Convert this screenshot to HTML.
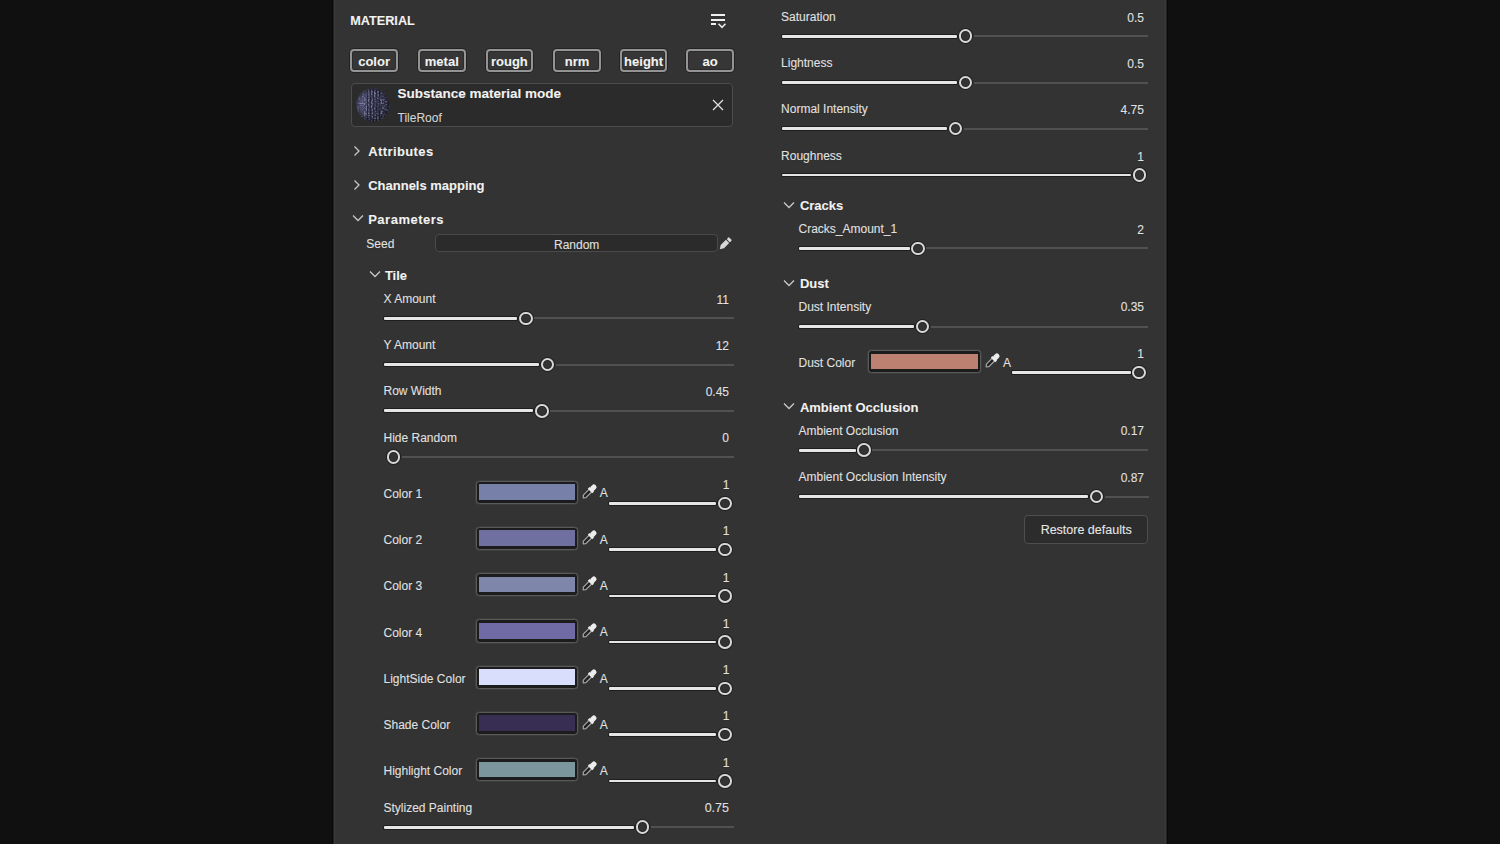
<!DOCTYPE html>
<html><head><meta charset="utf-8"><style>
html,body{margin:0;padding:0;width:1500px;height:844px;overflow:hidden;background:#101010;}
.panel{position:absolute;left:333px;top:0;width:834px;height:844px;background:#333333;border-left:1px solid #222;border-right:1px solid #222;box-sizing:border-box;box-shadow:-1px 0 0 #0a0a0a, 1px 0 0 #0a0a0a, inset 1px 0 0 #3a3a3a, inset -1px 0 0 #3a3a3a;}
.a{position:absolute;}
.t{position:absolute;white-space:nowrap;font-family:'Liberation Sans', sans-serif;-webkit-text-stroke:0.12px currentColor;text-shadow:0 0 1px rgba(0,0,0,.55);}
</style></head><body>
<div class="panel"></div>
<div class="t" style="top:14.5px;font-size:12.7px;line-height:12.7px;font-weight:700;color:#f2f2f2;left:350.2px;">MATERIAL</div>
<div class="a" style="left:711.0px;top:14.0px;width:14.0px;height:2.0px;background:#f0f0f0;"></div>
<div class="a" style="left:711.0px;top:18.5px;width:14.0px;height:2.0px;background:#f0f0f0;"></div>
<div class="a" style="left:711.0px;top:23.0px;width:5.0px;height:2.0px;background:#f0f0f0;"></div>
<svg class="a" style="left:717px;top:22px" width="10" height="8" viewBox="0 0 10 8"><path d="M1.5 1.8 L5 5.3 L8.5 1.8" fill="none" stroke="#e8e8e8" stroke-width="1.6"/></svg>
<div class="a" style="left:350.3px;top:48.8px;width:47.6px;height:23.0px;border:2px solid #949494;border-radius:4px;box-sizing:border-box;background:#363636;box-shadow:0 0 0 1px rgba(0,0,0,.3), inset 0 0 0 1px rgba(0,0,0,.2);"></div>
<div class="t" style="left:350.3px;width:47.6px;text-align:center;top:55px;font-size:13px;line-height:13px;font-weight:700;color:#f2f2f2;">color</div>
<div class="a" style="left:418.0px;top:48.8px;width:47.6px;height:23.0px;border:2px solid #949494;border-radius:4px;box-sizing:border-box;background:#363636;box-shadow:0 0 0 1px rgba(0,0,0,.3), inset 0 0 0 1px rgba(0,0,0,.2);"></div>
<div class="t" style="left:418.0px;width:47.6px;text-align:center;top:55px;font-size:13px;line-height:13px;font-weight:700;color:#f2f2f2;">metal</div>
<div class="a" style="left:485.6px;top:48.8px;width:47.6px;height:23.0px;border:2px solid #949494;border-radius:4px;box-sizing:border-box;background:#363636;box-shadow:0 0 0 1px rgba(0,0,0,.3), inset 0 0 0 1px rgba(0,0,0,.2);"></div>
<div class="t" style="left:485.6px;width:47.6px;text-align:center;top:55px;font-size:13px;line-height:13px;font-weight:700;color:#f2f2f2;">rough</div>
<div class="a" style="left:553.3px;top:48.8px;width:47.6px;height:23.0px;border:2px solid #949494;border-radius:4px;box-sizing:border-box;background:#363636;box-shadow:0 0 0 1px rgba(0,0,0,.3), inset 0 0 0 1px rgba(0,0,0,.2);"></div>
<div class="t" style="left:553.3px;width:47.6px;text-align:center;top:55px;font-size:13px;line-height:13px;font-weight:700;color:#f2f2f2;">nrm</div>
<div class="a" style="left:619.8px;top:48.8px;width:47.6px;height:23.0px;border:2px solid #949494;border-radius:4px;box-sizing:border-box;background:#363636;box-shadow:0 0 0 1px rgba(0,0,0,.3), inset 0 0 0 1px rgba(0,0,0,.2);"></div>
<div class="t" style="left:619.8px;width:47.6px;text-align:center;top:55px;font-size:13px;line-height:13px;font-weight:700;color:#f2f2f2;">height</div>
<div class="a" style="left:686.3px;top:48.8px;width:47.6px;height:23.0px;border:2px solid #949494;border-radius:4px;box-sizing:border-box;background:#363636;box-shadow:0 0 0 1px rgba(0,0,0,.3), inset 0 0 0 1px rgba(0,0,0,.2);"></div>
<div class="t" style="left:686.3px;width:47.6px;text-align:center;top:55px;font-size:13px;line-height:13px;font-weight:700;color:#f2f2f2;">ao</div>
<div class="a" style="left:350.6px;top:83.2px;width:382.6px;height:44.0px;border:1.5px solid #4c4c4c;border-radius:4px;box-sizing:border-box;background:#2b2b2b;"></div>
<svg class="a" style="left:356px;top:88px" width="34" height="34" viewBox="0 0 34 34">
<defs>
<clipPath id="cp"><circle cx="17" cy="17" r="16.6"/></clipPath>
<linearGradient id="lg" x1="0" y1="0" x2="1" y2="0.4"><stop offset="0" stop-color="#5e5e88"/><stop offset="0.4" stop-color="#434362"/><stop offset="1" stop-color="#26263a"/></linearGradient>
<radialGradient id="rg" cx="0.5" cy="0.5" r="0.5"><stop offset="0.75" stop-color="#000" stop-opacity="0"/><stop offset="1" stop-color="#15151f" stop-opacity="0.6"/></radialGradient>
<filter id="nz" x="0" y="0" width="100%" height="100%"><feTurbulence type="fractalNoise" baseFrequency="0.6" numOctaves="1" seed="4"/><feColorMatrix values="0 0 0 0 0.7  0 0 0 0 0.7  0 0 0 0 0.85  0 0 0 5 -2.4"/></filter>
</defs>
<g clip-path="url(#cp)">
<rect width="34" height="34" fill="url(#lg)"/>
<rect width="34" height="34" filter="url(#nz)" opacity="0.38"/>
<g stroke="#101020" stroke-width="1" opacity="0.6"><path d="M11.5 0V34M14.5 0V34M17.5 0V34M20.5 0V34M23.5 0V34"/></g>
<rect width="34" height="34" fill="url(#rg)"/>
</g>
</svg>
<div class="t" style="top:87.4px;font-size:13.5px;line-height:13.5px;font-weight:700;color:#f2f2f2;left:397.5px;">Substance material mode</div>
<div class="t" style="top:112.0px;font-size:12px;line-height:12px;font-weight:400;color:#d6d6d6;left:397.5px;">TileRoof</div>
<svg class="a" style="left:712px;top:99px" width="12" height="12" viewBox="0 0 12 12"><path d="M1 1 L11 11 M11 1 L1 11" stroke="#e0e0e0" stroke-width="1.3"/></svg>
<svg class="a" style="left:353px;top:144.5px" width="8" height="12" viewBox="0 0 8 12"><path d="M1.5 1.5 L6 6 L1.5 10.5" fill="none" stroke="#c8c8c8" stroke-width="1.3"/></svg>
<div class="t" style="top:144.8px;font-size:13px;line-height:13px;font-weight:700;color:#f2f2f2;letter-spacing:0.4px;left:368.2px;">Attributes</div>
<svg class="a" style="left:353px;top:179px" width="8" height="12" viewBox="0 0 8 12"><path d="M1.5 1.5 L6 6 L1.5 10.5" fill="none" stroke="#c8c8c8" stroke-width="1.3"/></svg>
<div class="t" style="top:179.0px;font-size:13px;line-height:13px;font-weight:700;color:#f2f2f2;left:368.2px;">Channels mapping</div>
<svg class="a" style="left:351.5px;top:213.5px" width="12" height="8" viewBox="0 0 12 8"><path d="M1 1.5 L6 6.5 L11 1.5" fill="none" stroke="#c8c8c8" stroke-width="1.3"/></svg>
<div class="t" style="top:212.5px;font-size:13px;line-height:13px;font-weight:700;color:#f2f2f2;letter-spacing:0.5px;left:368.2px;">Parameters</div>
<div class="t" style="top:237.8px;font-size:12px;line-height:12px;font-weight:400;color:#e2e2e2;left:366.3px;">Seed</div>
<div class="a" style="left:435.4px;top:234.2px;width:282.6px;height:17.6px;border:1.5px solid #4a4a4a;border-radius:4px;box-sizing:border-box;background:#2b2b2b;"></div>
<div class="t" style="left:435.4px;width:282.6px;text-align:center;top:238.5px;font-size:12px;line-height:12px;color:#e0e0e0;">Random</div>
<svg class="a" style="left:717px;top:235.6px;overflow:visible" width="16" height="16" viewBox="0 0 16 16"><g transform="rotate(-45 8 8)" fill="#d8d8d8"><path d="M0.6 8 L4.2 5.7 L11.6 5.7 L11.6 10.3 L4.2 10.3 Z"/><rect x="12.6" y="5.7" width="3" height="4.6" rx="1"/></g></svg>
<svg class="a" style="left:368.5px;top:270.3px" width="12" height="8" viewBox="0 0 12 8"><path d="M1 1.5 L6 6.5 L11 1.5" fill="none" stroke="#c8c8c8" stroke-width="1.3"/></svg>
<div class="t" style="top:269.2px;font-size:13px;line-height:13px;font-weight:700;color:#f2f2f2;left:384.9px;">Tile</div>
<div class="t" style="top:292.8px;font-size:12px;line-height:12px;font-weight:400;color:#e2e2e2;left:383.5px;">X Amount</div>
<div class="t" style="top:293.6px;font-size:12px;line-height:12px;font-weight:400;color:#e2e2e2;right:771.0px;">11</div>
<div class="a" style="left:384.0px;top:316.9px;width:133.4px;height:2.8px;background:#e6e6e6;border-radius:1px;box-shadow:0 0 0 1px rgba(0,0,0,.4);"></div>
<div class="a" style="left:534.2px;top:317.3px;width:199.4px;height:2.0px;background:#515151;"></div>
<div class="a" style="left:519.2px;top:311.5px;width:13.6px;height:13.6px;border:2.5px solid #d8d8d8;border-radius:50%;box-sizing:border-box;box-shadow:0 0 0 1px rgba(0,0,0,.4), inset 0 0 0 1px rgba(0,0,0,.3);"></div>
<div class="t" style="top:339.1px;font-size:12px;line-height:12px;font-weight:400;color:#e2e2e2;left:383.5px;">Y Amount</div>
<div class="t" style="top:339.9px;font-size:12px;line-height:12px;font-weight:400;color:#e2e2e2;right:771.0px;">12</div>
<div class="a" style="left:384.0px;top:363.2px;width:155.1px;height:2.8px;background:#e6e6e6;border-radius:1px;box-shadow:0 0 0 1px rgba(0,0,0,.4);"></div>
<div class="a" style="left:555.9px;top:363.6px;width:177.7px;height:2.0px;background:#515151;"></div>
<div class="a" style="left:540.9px;top:357.8px;width:13.6px;height:13.6px;border:2.5px solid #d8d8d8;border-radius:50%;box-sizing:border-box;box-shadow:0 0 0 1px rgba(0,0,0,.4), inset 0 0 0 1px rgba(0,0,0,.3);"></div>
<div class="t" style="top:385.3px;font-size:12px;line-height:12px;font-weight:400;color:#e2e2e2;left:383.5px;">Row Width</div>
<div class="t" style="top:386.1px;font-size:12px;line-height:12px;font-weight:400;color:#e2e2e2;right:771.0px;">0.45</div>
<div class="a" style="left:384.0px;top:409.4px;width:149.4px;height:2.8px;background:#e6e6e6;border-radius:1px;box-shadow:0 0 0 1px rgba(0,0,0,.4);"></div>
<div class="a" style="left:550.2px;top:409.8px;width:183.4px;height:2.0px;background:#515151;"></div>
<div class="a" style="left:535.2px;top:404.0px;width:13.6px;height:13.6px;border:2.5px solid #d8d8d8;border-radius:50%;box-sizing:border-box;box-shadow:0 0 0 1px rgba(0,0,0,.4), inset 0 0 0 1px rgba(0,0,0,.3);"></div>
<div class="t" style="top:431.6px;font-size:12px;line-height:12px;font-weight:400;color:#e2e2e2;left:383.5px;">Hide Random</div>
<div class="t" style="top:432.4px;font-size:12px;line-height:12px;font-weight:400;color:#e2e2e2;right:771.0px;">0</div>
<div class="a" style="left:401.5px;top:456.1px;width:332.1px;height:2.0px;background:#515151;"></div>
<div class="a" style="left:386.5px;top:450.3px;width:13.6px;height:13.6px;border:2.5px solid #d8d8d8;border-radius:50%;box-sizing:border-box;box-shadow:0 0 0 1px rgba(0,0,0,.4), inset 0 0 0 1px rgba(0,0,0,.3);"></div>
<div class="t" style="top:487.8px;font-size:12px;line-height:12px;font-weight:400;color:#e2e2e2;left:383.5px;">Color 1</div>
<div class="a" style="left:475.7px;top:480.5px;width:102.4px;height:23.4px;border:1px solid #5a5a5a;border-radius:3.5px;box-sizing:border-box;background:#1c1c1c;box-shadow:0 0 0 0.6px rgba(90,90,90,.5);"></div>
<div class="a" style="left:478.9px;top:484.0px;width:96.0px;height:15.9px;background:#7680a8;"></div>
<svg class="a" style="left:581.5px;top:483.84000000000003px;overflow:visible" width="16" height="16" viewBox="0 0 16 16"><g transform="rotate(-45 7.5 7.5)">
<path d="M-1.4 7.5 L0.6 5.7 L9 5.7 L9 9.3 L0.6 9.3 Z" fill="#222" stroke="#a8a8a8" stroke-width="1.2" stroke-linejoin="round"/>
<rect x="8.3" y="4.3" width="2.4" height="6.4" fill="#ececec"/>
<rect x="9.5" y="4.9" width="6.8" height="5.2" rx="2.4" fill="#ececec"/>
</g></svg>
<div class="t" style="top:487.4px;font-size:12px;line-height:12px;font-weight:400;color:#e2e2e2;left:599.7px;">A</div>
<div class="t" style="top:479.0px;font-size:12px;line-height:12px;font-weight:400;color:#e2e2e2;right:770.6px;">1</div>
<div class="a" style="left:608.6px;top:501.9px;width:107.6px;height:2.8px;background:#e6e6e6;border-radius:1px;box-shadow:0 0 0 1px rgba(0,0,0,.4);"></div>
<div class="a" style="left:718.0px;top:496.5px;width:13.6px;height:13.6px;border:2.5px solid #d8d8d8;border-radius:50%;box-sizing:border-box;box-shadow:0 0 0 1px rgba(0,0,0,.4), inset 0 0 0 1px rgba(0,0,0,.3);"></div>
<div class="t" style="top:534.1px;font-size:12px;line-height:12px;font-weight:400;color:#e2e2e2;left:383.5px;">Color 2</div>
<div class="a" style="left:475.7px;top:526.8px;width:102.4px;height:23.4px;border:1px solid #5a5a5a;border-radius:3.5px;box-sizing:border-box;background:#1c1c1c;box-shadow:0 0 0 0.6px rgba(90,90,90,.5);"></div>
<div class="a" style="left:478.9px;top:530.3px;width:96.0px;height:15.9px;background:#6f70a0;"></div>
<svg class="a" style="left:581.5px;top:530.1px;overflow:visible" width="16" height="16" viewBox="0 0 16 16"><g transform="rotate(-45 7.5 7.5)">
<path d="M-1.4 7.5 L0.6 5.7 L9 5.7 L9 9.3 L0.6 9.3 Z" fill="#222" stroke="#a8a8a8" stroke-width="1.2" stroke-linejoin="round"/>
<rect x="8.3" y="4.3" width="2.4" height="6.4" fill="#ececec"/>
<rect x="9.5" y="4.9" width="6.8" height="5.2" rx="2.4" fill="#ececec"/>
</g></svg>
<div class="t" style="top:533.7px;font-size:12px;line-height:12px;font-weight:400;color:#e2e2e2;left:599.7px;">A</div>
<div class="t" style="top:525.3px;font-size:12px;line-height:12px;font-weight:400;color:#e2e2e2;right:770.6px;">1</div>
<div class="a" style="left:608.6px;top:548.2px;width:107.6px;height:2.8px;background:#e6e6e6;border-radius:1px;box-shadow:0 0 0 1px rgba(0,0,0,.4);"></div>
<div class="a" style="left:718.0px;top:542.8px;width:13.6px;height:13.6px;border:2.5px solid #d8d8d8;border-radius:50%;box-sizing:border-box;box-shadow:0 0 0 1px rgba(0,0,0,.4), inset 0 0 0 1px rgba(0,0,0,.3);"></div>
<div class="t" style="top:580.4px;font-size:12px;line-height:12px;font-weight:400;color:#e2e2e2;left:383.5px;">Color 3</div>
<div class="a" style="left:475.7px;top:573.1px;width:102.4px;height:23.4px;border:1px solid #5a5a5a;border-radius:3.5px;box-sizing:border-box;background:#1c1c1c;box-shadow:0 0 0 0.6px rgba(90,90,90,.5);"></div>
<div class="a" style="left:478.9px;top:576.6px;width:96.0px;height:15.9px;background:#7e87aa;"></div>
<svg class="a" style="left:581.5px;top:576.36px;overflow:visible" width="16" height="16" viewBox="0 0 16 16"><g transform="rotate(-45 7.5 7.5)">
<path d="M-1.4 7.5 L0.6 5.7 L9 5.7 L9 9.3 L0.6 9.3 Z" fill="#222" stroke="#a8a8a8" stroke-width="1.2" stroke-linejoin="round"/>
<rect x="8.3" y="4.3" width="2.4" height="6.4" fill="#ececec"/>
<rect x="9.5" y="4.9" width="6.8" height="5.2" rx="2.4" fill="#ececec"/>
</g></svg>
<div class="t" style="top:580.0px;font-size:12px;line-height:12px;font-weight:400;color:#e2e2e2;left:599.7px;">A</div>
<div class="t" style="top:571.6px;font-size:12px;line-height:12px;font-weight:400;color:#e2e2e2;right:770.6px;">1</div>
<div class="a" style="left:608.6px;top:594.5px;width:107.6px;height:2.8px;background:#e6e6e6;border-radius:1px;box-shadow:0 0 0 1px rgba(0,0,0,.4);"></div>
<div class="a" style="left:718.0px;top:589.1px;width:13.6px;height:13.6px;border:2.5px solid #d8d8d8;border-radius:50%;box-sizing:border-box;box-shadow:0 0 0 1px rgba(0,0,0,.4), inset 0 0 0 1px rgba(0,0,0,.3);"></div>
<div class="t" style="top:626.6px;font-size:12px;line-height:12px;font-weight:400;color:#e2e2e2;left:383.5px;">Color 4</div>
<div class="a" style="left:475.7px;top:619.3px;width:102.4px;height:23.4px;border:1px solid #5a5a5a;border-radius:3.5px;box-sizing:border-box;background:#1c1c1c;box-shadow:0 0 0 0.6px rgba(90,90,90,.5);"></div>
<div class="a" style="left:478.9px;top:622.8px;width:96.0px;height:15.9px;background:#716ba5;"></div>
<svg class="a" style="left:581.5px;top:622.62px;overflow:visible" width="16" height="16" viewBox="0 0 16 16"><g transform="rotate(-45 7.5 7.5)">
<path d="M-1.4 7.5 L0.6 5.7 L9 5.7 L9 9.3 L0.6 9.3 Z" fill="#222" stroke="#a8a8a8" stroke-width="1.2" stroke-linejoin="round"/>
<rect x="8.3" y="4.3" width="2.4" height="6.4" fill="#ececec"/>
<rect x="9.5" y="4.9" width="6.8" height="5.2" rx="2.4" fill="#ececec"/>
</g></svg>
<div class="t" style="top:626.2px;font-size:12px;line-height:12px;font-weight:400;color:#e2e2e2;left:599.7px;">A</div>
<div class="t" style="top:617.8px;font-size:12px;line-height:12px;font-weight:400;color:#e2e2e2;right:770.6px;">1</div>
<div class="a" style="left:608.6px;top:640.7px;width:107.6px;height:2.8px;background:#e6e6e6;border-radius:1px;box-shadow:0 0 0 1px rgba(0,0,0,.4);"></div>
<div class="a" style="left:718.0px;top:635.3px;width:13.6px;height:13.6px;border:2.5px solid #d8d8d8;border-radius:50%;box-sizing:border-box;box-shadow:0 0 0 1px rgba(0,0,0,.4), inset 0 0 0 1px rgba(0,0,0,.3);"></div>
<div class="t" style="top:672.9px;font-size:12px;line-height:12px;font-weight:400;color:#e2e2e2;left:383.5px;">LightSide Color</div>
<div class="a" style="left:475.7px;top:665.6px;width:102.4px;height:23.4px;border:1px solid #5a5a5a;border-radius:3.5px;box-sizing:border-box;background:#1c1c1c;box-shadow:0 0 0 0.6px rgba(90,90,90,.5);"></div>
<div class="a" style="left:478.9px;top:669.1px;width:96.0px;height:15.9px;background:#d8defc;"></div>
<svg class="a" style="left:581.5px;top:668.88px;overflow:visible" width="16" height="16" viewBox="0 0 16 16"><g transform="rotate(-45 7.5 7.5)">
<path d="M-1.4 7.5 L0.6 5.7 L9 5.7 L9 9.3 L0.6 9.3 Z" fill="#222" stroke="#a8a8a8" stroke-width="1.2" stroke-linejoin="round"/>
<rect x="8.3" y="4.3" width="2.4" height="6.4" fill="#ececec"/>
<rect x="9.5" y="4.9" width="6.8" height="5.2" rx="2.4" fill="#ececec"/>
</g></svg>
<div class="t" style="top:672.5px;font-size:12px;line-height:12px;font-weight:400;color:#e2e2e2;left:599.7px;">A</div>
<div class="t" style="top:664.1px;font-size:12px;line-height:12px;font-weight:400;color:#e2e2e2;right:770.6px;">1</div>
<div class="a" style="left:608.6px;top:687.0px;width:107.6px;height:2.8px;background:#e6e6e6;border-radius:1px;box-shadow:0 0 0 1px rgba(0,0,0,.4);"></div>
<div class="a" style="left:718.0px;top:681.6px;width:13.6px;height:13.6px;border:2.5px solid #d8d8d8;border-radius:50%;box-sizing:border-box;box-shadow:0 0 0 1px rgba(0,0,0,.4), inset 0 0 0 1px rgba(0,0,0,.3);"></div>
<div class="t" style="top:719.1px;font-size:12px;line-height:12px;font-weight:400;color:#e2e2e2;left:383.5px;">Shade Color</div>
<div class="a" style="left:475.7px;top:711.8px;width:102.4px;height:23.4px;border:1px solid #5a5a5a;border-radius:3.5px;box-sizing:border-box;background:#1c1c1c;box-shadow:0 0 0 0.6px rgba(90,90,90,.5);"></div>
<div class="a" style="left:478.9px;top:715.3px;width:96.0px;height:15.9px;background:#382e54;"></div>
<svg class="a" style="left:581.5px;top:715.14px;overflow:visible" width="16" height="16" viewBox="0 0 16 16"><g transform="rotate(-45 7.5 7.5)">
<path d="M-1.4 7.5 L0.6 5.7 L9 5.7 L9 9.3 L0.6 9.3 Z" fill="#222" stroke="#a8a8a8" stroke-width="1.2" stroke-linejoin="round"/>
<rect x="8.3" y="4.3" width="2.4" height="6.4" fill="#ececec"/>
<rect x="9.5" y="4.9" width="6.8" height="5.2" rx="2.4" fill="#ececec"/>
</g></svg>
<div class="t" style="top:718.7px;font-size:12px;line-height:12px;font-weight:400;color:#e2e2e2;left:599.7px;">A</div>
<div class="t" style="top:710.3px;font-size:12px;line-height:12px;font-weight:400;color:#e2e2e2;right:770.6px;">1</div>
<div class="a" style="left:608.6px;top:733.2px;width:107.6px;height:2.8px;background:#e6e6e6;border-radius:1px;box-shadow:0 0 0 1px rgba(0,0,0,.4);"></div>
<div class="a" style="left:718.0px;top:727.8px;width:13.6px;height:13.6px;border:2.5px solid #d8d8d8;border-radius:50%;box-sizing:border-box;box-shadow:0 0 0 1px rgba(0,0,0,.4), inset 0 0 0 1px rgba(0,0,0,.3);"></div>
<div class="t" style="top:765.4px;font-size:12px;line-height:12px;font-weight:400;color:#e2e2e2;left:383.5px;">Highlight Color</div>
<div class="a" style="left:475.7px;top:758.1px;width:102.4px;height:23.4px;border:1px solid #5a5a5a;border-radius:3.5px;box-sizing:border-box;background:#1c1c1c;box-shadow:0 0 0 0.6px rgba(90,90,90,.5);"></div>
<div class="a" style="left:478.9px;top:761.6px;width:96.0px;height:15.9px;background:#7b969c;"></div>
<svg class="a" style="left:581.5px;top:761.4px;overflow:visible" width="16" height="16" viewBox="0 0 16 16"><g transform="rotate(-45 7.5 7.5)">
<path d="M-1.4 7.5 L0.6 5.7 L9 5.7 L9 9.3 L0.6 9.3 Z" fill="#222" stroke="#a8a8a8" stroke-width="1.2" stroke-linejoin="round"/>
<rect x="8.3" y="4.3" width="2.4" height="6.4" fill="#ececec"/>
<rect x="9.5" y="4.9" width="6.8" height="5.2" rx="2.4" fill="#ececec"/>
</g></svg>
<div class="t" style="top:765.0px;font-size:12px;line-height:12px;font-weight:400;color:#e2e2e2;left:599.7px;">A</div>
<div class="t" style="top:756.6px;font-size:12px;line-height:12px;font-weight:400;color:#e2e2e2;right:770.6px;">1</div>
<div class="a" style="left:608.6px;top:779.5px;width:107.6px;height:2.8px;background:#e6e6e6;border-radius:1px;box-shadow:0 0 0 1px rgba(0,0,0,.4);"></div>
<div class="a" style="left:718.0px;top:774.1px;width:13.6px;height:13.6px;border:2.5px solid #d8d8d8;border-radius:50%;box-sizing:border-box;box-shadow:0 0 0 1px rgba(0,0,0,.4), inset 0 0 0 1px rgba(0,0,0,.3);"></div>
<div class="t" style="top:801.6px;font-size:12px;line-height:12px;font-weight:400;color:#e2e2e2;left:383.5px;">Stylized Painting</div>
<div class="t" style="top:802.4px;font-size:12.5px;line-height:12.5px;font-weight:400;color:#e2e2e2;right:771.0px;">0.75</div>
<div class="a" style="left:384.0px;top:825.8px;width:249.8px;height:2.8px;background:#e6e6e6;border-radius:1px;box-shadow:0 0 0 1px rgba(0,0,0,.4);"></div>
<div class="a" style="left:650.6px;top:826.2px;width:83.0px;height:2.0px;background:#515151;"></div>
<div class="a" style="left:635.6px;top:820.4px;width:13.6px;height:13.6px;border:2.5px solid #d8d8d8;border-radius:50%;box-sizing:border-box;box-shadow:0 0 0 1px rgba(0,0,0,.4), inset 0 0 0 1px rgba(0,0,0,.3);"></div>
<div class="t" style="top:10.9px;font-size:12px;line-height:12px;font-weight:400;color:#e2e2e2;left:781.1px;">Saturation</div>
<div class="t" style="top:11.7px;font-size:12px;line-height:12px;font-weight:400;color:#e2e2e2;right:356.1px;">0.5</div>
<div class="a" style="left:782.0px;top:34.8px;width:174.8px;height:2.8px;background:#e6e6e6;border-radius:1px;box-shadow:0 0 0 1px rgba(0,0,0,.4);"></div>
<div class="a" style="left:973.6px;top:35.2px;width:174.7px;height:2.0px;background:#515151;"></div>
<div class="a" style="left:958.6px;top:29.4px;width:13.6px;height:13.6px;border:2.5px solid #d8d8d8;border-radius:50%;box-sizing:border-box;box-shadow:0 0 0 1px rgba(0,0,0,.4), inset 0 0 0 1px rgba(0,0,0,.3);"></div>
<div class="t" style="top:57.2px;font-size:12px;line-height:12px;font-weight:400;color:#e2e2e2;left:781.1px;">Lightness</div>
<div class="t" style="top:58.0px;font-size:12px;line-height:12px;font-weight:400;color:#e2e2e2;right:356.1px;">0.5</div>
<div class="a" style="left:782.0px;top:81.1px;width:174.8px;height:2.8px;background:#e6e6e6;border-radius:1px;box-shadow:0 0 0 1px rgba(0,0,0,.4);"></div>
<div class="a" style="left:973.6px;top:81.5px;width:174.7px;height:2.0px;background:#515151;"></div>
<div class="a" style="left:958.6px;top:75.7px;width:13.6px;height:13.6px;border:2.5px solid #d8d8d8;border-radius:50%;box-sizing:border-box;box-shadow:0 0 0 1px rgba(0,0,0,.4), inset 0 0 0 1px rgba(0,0,0,.3);"></div>
<div class="t" style="top:103.4px;font-size:12px;line-height:12px;font-weight:400;color:#e2e2e2;left:781.1px;">Normal Intensity</div>
<div class="t" style="top:104.2px;font-size:12px;line-height:12px;font-weight:400;color:#e2e2e2;right:356.1px;">4.75</div>
<div class="a" style="left:782.0px;top:127.3px;width:165.0px;height:2.8px;background:#e6e6e6;border-radius:1px;box-shadow:0 0 0 1px rgba(0,0,0,.4);"></div>
<div class="a" style="left:963.8px;top:127.7px;width:184.5px;height:2.0px;background:#515151;"></div>
<div class="a" style="left:948.8px;top:121.9px;width:13.6px;height:13.6px;border:2.5px solid #d8d8d8;border-radius:50%;box-sizing:border-box;box-shadow:0 0 0 1px rgba(0,0,0,.4), inset 0 0 0 1px rgba(0,0,0,.3);"></div>
<div class="t" style="top:149.7px;font-size:12px;line-height:12px;font-weight:400;color:#e2e2e2;left:781.1px;">Roughness</div>
<div class="t" style="top:150.5px;font-size:12px;line-height:12px;font-weight:400;color:#e2e2e2;right:356.1px;">1</div>
<div class="a" style="left:782.0px;top:173.6px;width:348.7px;height:2.8px;background:#e6e6e6;border-radius:1px;box-shadow:0 0 0 1px rgba(0,0,0,.4);"></div>
<div class="a" style="left:1132.5px;top:168.2px;width:13.6px;height:13.6px;border:2.5px solid #d8d8d8;border-radius:50%;box-sizing:border-box;box-shadow:0 0 0 1px rgba(0,0,0,.4), inset 0 0 0 1px rgba(0,0,0,.3);"></div>
<svg class="a" style="left:783px;top:200.5px" width="12" height="8" viewBox="0 0 12 8"><path d="M1 1.5 L6 6.5 L11 1.5" fill="none" stroke="#c8c8c8" stroke-width="1.3"/></svg>
<div class="t" style="top:198.9px;font-size:13px;line-height:13px;font-weight:700;color:#f2f2f2;left:799.9px;">Cracks</div>
<div class="t" style="top:222.7px;font-size:12px;line-height:12px;font-weight:400;color:#e2e2e2;left:798.5px;">Cracks_Amount_1</div>
<div class="t" style="top:223.9px;font-size:12px;line-height:12px;font-weight:400;color:#e2e2e2;right:356.0px;">2</div>
<div class="a" style="left:799.0px;top:246.9px;width:110.5px;height:2.8px;background:#e6e6e6;border-radius:1px;box-shadow:0 0 0 1px rgba(0,0,0,.4);"></div>
<div class="a" style="left:926.3px;top:247.3px;width:222.2px;height:2.0px;background:#515151;"></div>
<div class="a" style="left:911.3px;top:241.5px;width:13.6px;height:13.6px;border:2.5px solid #d8d8d8;border-radius:50%;box-sizing:border-box;box-shadow:0 0 0 1px rgba(0,0,0,.4), inset 0 0 0 1px rgba(0,0,0,.3);"></div>
<svg class="a" style="left:783px;top:278.5px" width="12" height="8" viewBox="0 0 12 8"><path d="M1 1.5 L6 6.5 L11 1.5" fill="none" stroke="#c8c8c8" stroke-width="1.3"/></svg>
<div class="t" style="top:276.8px;font-size:13px;line-height:13px;font-weight:700;color:#f2f2f2;left:799.9px;">Dust</div>
<div class="t" style="top:300.9px;font-size:12px;line-height:12px;font-weight:400;color:#e2e2e2;left:798.5px;">Dust Intensity</div>
<div class="t" style="top:301.4px;font-size:12px;line-height:12px;font-weight:400;color:#e2e2e2;right:356.0px;">0.35</div>
<div class="a" style="left:799.0px;top:325.1px;width:115.0px;height:2.8px;background:#e6e6e6;border-radius:1px;box-shadow:0 0 0 1px rgba(0,0,0,.4);"></div>
<div class="a" style="left:930.8px;top:325.5px;width:217.7px;height:2.0px;background:#515151;"></div>
<div class="a" style="left:915.8px;top:319.7px;width:13.6px;height:13.6px;border:2.5px solid #d8d8d8;border-radius:50%;box-sizing:border-box;box-shadow:0 0 0 1px rgba(0,0,0,.4), inset 0 0 0 1px rgba(0,0,0,.3);"></div>
<div class="t" style="top:356.9px;font-size:12px;line-height:12px;font-weight:400;color:#e2e2e2;left:798.5px;">Dust Color</div>
<div class="a" style="left:867.6px;top:350.3px;width:113.4px;height:23.0px;border:1px solid #5a5a5a;border-radius:3.5px;box-sizing:border-box;background:#1c1c1c;box-shadow:0 0 0 0.6px rgba(90,90,90,.5);"></div>
<div class="a" style="left:870.8px;top:353.8px;width:107.0px;height:15.5px;background:#bc8170;"></div>
<svg class="a" style="left:985px;top:353.0px;overflow:visible" width="16" height="16" viewBox="0 0 16 16"><g transform="rotate(-45 7.5 7.5)">
<path d="M-1.4 7.5 L0.6 5.7 L9 5.7 L9 9.3 L0.6 9.3 Z" fill="#222" stroke="#a8a8a8" stroke-width="1.2" stroke-linejoin="round"/>
<rect x="8.3" y="4.3" width="2.4" height="6.4" fill="#ececec"/>
<rect x="9.5" y="4.9" width="6.8" height="5.2" rx="2.4" fill="#ececec"/>
</g></svg>
<div class="t" style="top:356.6px;font-size:12px;line-height:12px;font-weight:400;color:#e2e2e2;left:1003.1px;">A</div>
<div class="t" style="top:347.6px;font-size:12px;line-height:12px;font-weight:400;color:#e2e2e2;right:356.0px;">1</div>
<div class="a" style="left:1011.7px;top:371.1px;width:118.9px;height:2.8px;background:#e6e6e6;border-radius:1px;box-shadow:0 0 0 1px rgba(0,0,0,.4);"></div>
<div class="a" style="left:1132.4px;top:365.7px;width:13.6px;height:13.6px;border:2.5px solid #d8d8d8;border-radius:50%;box-sizing:border-box;box-shadow:0 0 0 1px rgba(0,0,0,.4), inset 0 0 0 1px rgba(0,0,0,.3);"></div>
<svg class="a" style="left:783px;top:401.5px" width="12" height="8" viewBox="0 0 12 8"><path d="M1 1.5 L6 6.5 L11 1.5" fill="none" stroke="#c8c8c8" stroke-width="1.3"/></svg>
<div class="t" style="top:401.0px;font-size:13px;line-height:13px;font-weight:700;color:#f2f2f2;left:799.9px;">Ambient Occlusion</div>
<div class="t" style="top:424.5px;font-size:12px;line-height:12px;font-weight:400;color:#e2e2e2;left:798.5px;">Ambient Occlusion</div>
<div class="t" style="top:425.3px;font-size:12px;line-height:12px;font-weight:400;color:#e2e2e2;right:356.0px;">0.17</div>
<div class="a" style="left:799.0px;top:448.8px;width:56.6px;height:2.8px;background:#e6e6e6;border-radius:1px;box-shadow:0 0 0 1px rgba(0,0,0,.4);"></div>
<div class="a" style="left:872.4px;top:449.2px;width:276.1px;height:2.0px;background:#515151;"></div>
<div class="a" style="left:857.4px;top:443.4px;width:13.6px;height:13.6px;border:2.5px solid #d8d8d8;border-radius:50%;box-sizing:border-box;box-shadow:0 0 0 1px rgba(0,0,0,.4), inset 0 0 0 1px rgba(0,0,0,.3);"></div>
<div class="t" style="top:470.8px;font-size:12px;line-height:12px;font-weight:400;color:#e2e2e2;left:798.5px;">Ambient Occlusion Intensity</div>
<div class="t" style="top:471.6px;font-size:12px;line-height:12px;font-weight:400;color:#e2e2e2;right:356.0px;">0.87</div>
<div class="a" style="left:799.0px;top:495.1px;width:288.7px;height:2.8px;background:#e6e6e6;border-radius:1px;box-shadow:0 0 0 1px rgba(0,0,0,.4);"></div>
<div class="a" style="left:1104.5px;top:495.5px;width:44.0px;height:2.0px;background:#515151;"></div>
<div class="a" style="left:1089.5px;top:489.7px;width:13.6px;height:13.6px;border:2.5px solid #d8d8d8;border-radius:50%;box-sizing:border-box;box-shadow:0 0 0 1px rgba(0,0,0,.4), inset 0 0 0 1px rgba(0,0,0,.3);"></div>
<div class="a" style="left:1024.3px;top:514.6px;width:123.4px;height:29.0px;border:1px solid #4e4e4e;border-radius:4px;box-sizing:border-box;background:#2c2c2c;"></div>
<div class="t" style="left:1024.6px;width:123.1px;text-align:center;top:524.4px;font-size:12.5px;line-height:12.5px;color:#e8e8e8;">Restore defaults</div>
</body></html>
